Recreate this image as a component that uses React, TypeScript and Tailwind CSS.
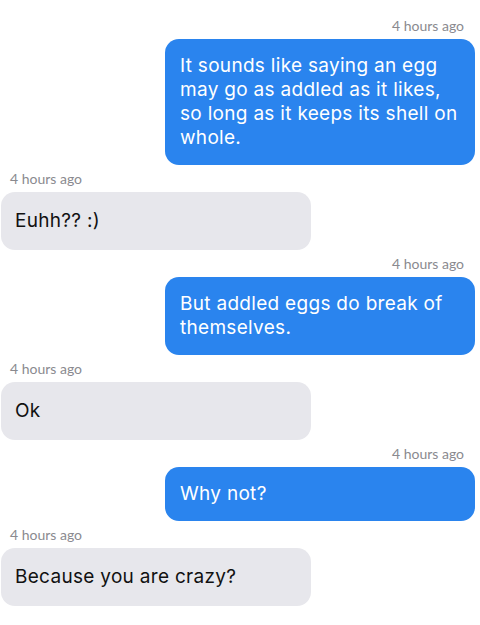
const messages = [
  { mine: true, text: 'It sounds like saying an egg may go as addled as it likes, so long as it keeps its shell on whole.' },
  { mine: false, text: 'Euhh?? :)' },
  { mine: true, text: 'But addled eggs do break of themselves.' },
  { mine: false, text: 'Ok' },
  { mine: true, text: 'Why not?' },
  { mine: false, text: 'Because you are crazy?' },
];

export default function App() {
  return (
    <div className="w-[480px] h-[625px] bg-white overflow-hidden pt-4 font-['Inter',sans-serif]">
      {messages.map((m, i) =>
        m.mine ? (
          <div key={i} className={`flex flex-col items-end pr-[5px] ${i > 0 ? 'mt-[4px]' : ''}`}>
            <span className="h-5 leading-5 pr-[11px] text-[14px] text-[#8a8a8f] font-['Lato',sans-serif]">
              4 hours ago
            </span>
            <div className="mt-[3px] w-[310px] rounded-[14px] bg-[#2a84ee] px-[15px] py-[15px] text-[19px] leading-6 tracking-[0.3px] text-white">
              {m.text}
            </div>
          </div>
        ) : (
          <div key={i} className="flex flex-col items-start pl-[1px] mt-[4px]">
            <span className="h-5 leading-5 pl-[9px] text-[14px] text-[#8a8a8f] font-['Lato',sans-serif]">
              4 hours ago
            </span>
            <div className="mt-[3px] w-[310px] rounded-[14px] bg-[#e7e7ec] px-[14px] py-[17px] text-[19px] leading-6 tracking-[0.3px] text-[#111]">
              {m.text}
            </div>
          </div>
        )
      )}
    </div>
  );
}
